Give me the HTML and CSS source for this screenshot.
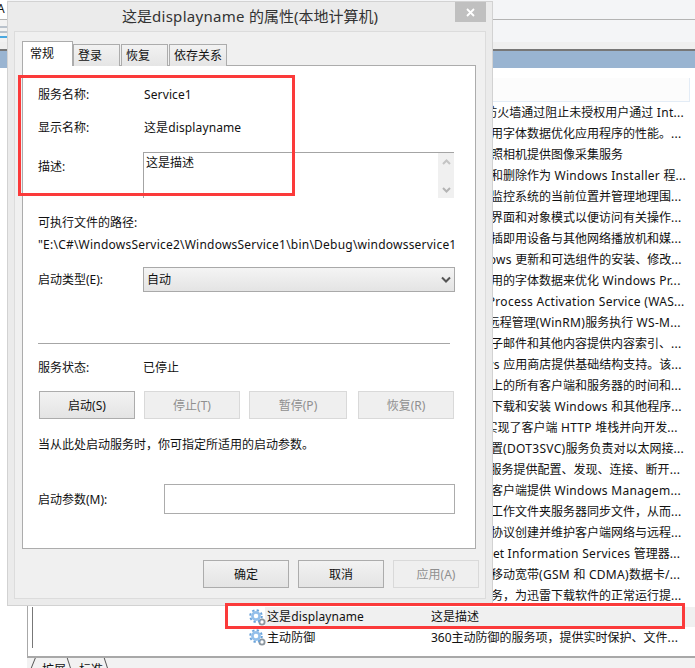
FILE: index.html
```html
<!DOCTYPE html>
<html lang="zh-CN">
<head>
	<meta charset="utf-8">
	<title>这是displayname 的属性(本地计算机)</title>
	<link rel="stylesheet" href="styles.css">
</head>
<body>
<svg class="defs" width="0" height="0">
	<symbol id="gear" viewBox="0 0 17 17">
		<circle cx="13" cy="13" r="2.6" fill="#fff" stroke="#8d979f" stroke-width="1.8"/>
		<circle cx="7" cy="7" r="5.8" fill="none" stroke="#6ba3da" stroke-width="2" stroke-dasharray="2.3 2.25"/>
		<circle cx="7" cy="7" r="3.6" fill="#fff" stroke="#93bfea" stroke-width="2.6"/>
	</symbol>
</svg>

<div class="services">
	<div class="topbar">
		<div class="stub"><span class="stub-letter">A</span></div>
	</div>
	<div class="toolbar">
		<div class="stub stub-icon"><i></i><i></i><i class="blue"></i></div>
	</div>
	<div class="strip"></div>
	<div class="band"></div>
	<div class="listwrap">
		<div class="gap"></div>
		<div class="listhead"></div>
		<div class="row"><span class="desc">Windows 防火墙通过阻止未授权用户通过<span class="lat"> Int...</span></span></div>
		<div class="row"><span class="desc">通过缓存常用字体数据优化应用程序的性能。<span class="lat">...</span></span></div>
		<div class="row"><span class="desc">为扫描仪和照相机提供图像采集服务</span></div>
		<div class="row"><span class="desc">添加、修改和删除作为<span class="lat"> Windows Installer </span>程<span class="lat">...</span></span></div>
		<div class="row"><span class="desc">此服务将会监控系统的当前位置并管理地理围<span class="lat">...</span></span></div>
		<div class="row"><span class="desc">提供通用的界面和对象模式以便访问有关操作<span class="lat">...</span></span></div>
		<div class="row"><span class="desc">此服务为即插即用设备与其他网络播放机和媒<span class="lat">...</span></span></div>
		<div class="row"><span class="desc">启用<span class="lat"> Windows </span>更新和可选组件的安装、修改<span class="lat">...</span></span></div>
		<div class="row"><span class="desc">通过缓存常用的字体数据来优化<span class="lat"> Windows Pr...</span></span></div>
		<div class="row"><span class="desc"><span class="lat">Windows Process Activation Service (WAS...</span></span></div>
		<div class="row"><span class="desc"><span class="lat">Windows </span>远程管理<span class="lat">(WinRM)</span>服务执行<span class="lat"> WS-M...</span></span></div>
		<div class="row"><span class="desc">为文件、电子邮件和其他内容提供内容索引、<span class="lat">...</span></span></div>
		<div class="row"><span class="desc">为<span class="lat"> Windows </span>应用商店提供基础结构支持。该<span class="lat">...</span></span></div>
		<div class="row"><span class="desc">维护在网络上的所有客户端和服务器的时间和<span class="lat">...</span></span></div>
		<div class="row"><span class="desc">启用检测、下载和安装<span class="lat"> Windows </span>和其他程序<span class="lat">...</span></span></div>
		<div class="row"><span class="desc">WinHTTP 实现了客户端<span class="lat"> HTTP </span>堆栈并向开发<span class="lat">...</span></span></div>
		<div class="row"><span class="desc">有线自动配置<span class="lat">(DOT3SVC)</span>服务负责对以太网接<span class="lat">...</span></span></div>
		<div class="row"><span class="desc">WLANSVC 服务提供配置、发现、连接、断开<span class="lat">...</span></span></div>
		<div class="row"><span class="desc">为各类远程客户端提供<span class="lat"> Windows Managem...</span></span></div>
		<div class="row"><span class="desc">此服务会将工作文件夹服务器同步文件，从而<span class="lat">...</span></span></div>
		<div class="row"><span class="desc">此服务通过协议创建并维护客户端网络与远程<span class="lat">...</span></span></div>
		<div class="row"><span class="desc">通过 Internet<span class="lat"> Information Services </span>管理器<span class="lat">...</span></span></div>
		<div class="row"><span class="desc">此服务管理移动宽带<span class="lat">(GSM </span>和<span class="lat"> CDMA)</span>数据卡<span class="lat">/...</span></span></div>
		<div class="row"><span class="desc">迅雷基础服务，为迅雷下载软件的正常运行提<span class="lat">...</span></span></div>
		<div class="row row-sel">
			<svg class="gear"><use href="#gear"/></svg>
			<span class="name">这是displayname</span>
			<span class="desc">这是描述</span>
		</div>
		<div class="row">
			<svg class="gear"><use href="#gear"/></svg>
			<span class="name">主动防御</span>
			<span class="desc">360主动防御的服务项，提供实时保护、文件<span class="lat">...</span></span>
		</div>
	</div>
	<div class="bottomtabs">
		<span class="btab btab-first">扩展</span>
		<span class="btab">标准</span>
	</div>
</div>

<div class="dialog">
	<div class="titlebar">这是<span class="lat">displayname </span>的属性(本地计算机)</div>
	<div class="closebtn">
		<svg width="11" height="11" viewBox="0 0 11 11"><path d="M2 2l7 7M9 2l-7 7" stroke="#fff" stroke-width="1.8" fill="none"/></svg>
	</div>
	<div class="panel">
		<div class="tabs">
			<span class="tab tab-on">常规</span>
			<span class="tab t2">登录</span>
			<span class="tab t2">恢复</span>
			<span class="tab t4">依存关系</span>
		</div>
		<div class="pane">
			<div class="field"><span>服务名称:</span><span class="val">Service1</span></div>
			<div class="field f-display"><span>显示名称:</span><span class="val">这是displayname</span></div>
			<div class="field f-desc">
				<span class="desc-label">描述:</span>
				<div class="textarea">
					<span class="textarea-text">这是描述</span>
					<div class="scroll">
						<svg width="9" height="6" viewBox="0 0 9 6"><path d="M1 5l3.5-3.5L8 5" stroke="#c4c4c4" stroke-width="2" fill="none"/></svg>
						<svg width="9" height="6" viewBox="0 0 9 6"><path d="M1 1l3.5 3.5L8 1" stroke="#b4b4b4" stroke-width="2" fill="none"/></svg>
					</div>
				</div>
			</div>
			<div class="line f-pathlabel">可执行文件的路径:</div>
			<div class="line f-path">"E:\C#\WindowsService2\WindowsService1\bin\Debug\windowsservice1</div>
			<div class="field f-type">
				<span>启动类型(E):</span>
				<div class="select">
					<span>自动</span>
					<svg width="10" height="7" viewBox="0 0 10 7"><path d="M1 1.5l4 4 4-4" stroke="#555" stroke-width="2" fill="none"/></svg>
				</div>
			</div>
			<div class="sep"></div>
			<div class="field f-status"><span>服务状态:</span><span>已停止</span></div>
			<div class="btnrow">
				<span class="btn b-ctl">启动(S)</span>
				<span class="btn b-ctl btn-off">停止(T)</span>
				<span class="btn b-pause btn-off">暂停(P)</span>
				<span class="btn b-ctl btn-off">恢复(R)</span>
			</div>
			<div class="line f-note">当从此处启动服务时，你可指定所适用的启动参数。</div>
			<div class="param">
				<span>启动参数(M):</span>
				<div class="input"></div>
			</div>
		</div>
		<div class="actions">
			<span class="btn b-act">确定</span>
			<span class="btn b-act">取消</span>
			<span class="btn b-act btn-off">应用(A)</span>
		</div>
	</div>
</div>

<div class="mark mark-top"></div>
<div class="mark mark-row"></div>
</body>
</html>
```

FILE: styles.css
```css
html, body {
	margin: 0;
	padding: 0;
}
body {
	position: relative;
	width: 695px;
	height: 668px;
	overflow: hidden;
	background: #fff;
	color: #111;
	font-family: "Noto Sans", "Noto Sans CJK SC", sans-serif;
	font-size: 12px;
	line-height: 20px;
}
.defs {
	position: absolute;
}
.lat {
	letter-spacing: .3px;
}

/* window behind the dialog */
.topbar {
	display: flex;
	height: 19px;
	background: #f4f5f7;
	border-bottom: 1px solid #b4b4b4;
}
.toolbar {
	display: flex;
	height: 22px;
	background: #f4f5f7;
}
.stub {
	width: 7px;
	background: #fff;
	overflow: hidden;
}
.stub-letter {
	display: block;
	margin-left: -3px;
	font-size: 12px;
	line-height: 18px;
}
.stub-icon {
	padding-top: 6px;
	box-sizing: border-box;
	background: #f2f2f2;
}
.stub-icon i {
	display: block;
	height: 2px;
	margin-bottom: 3px;
	background: #b9c2cc;
}
.stub-icon i.blue {
	background: #4aa8e0;
}
.strip {
	height: 7px;
	background: #efefef;
	border-bottom: 2px solid #777;
}
.band {
	height: 17px;
	background: #99b4d1;
}
.listwrap {
	height: 588px;
	margin-left: 27px;
	padding-left: 4px;
	border-left: 1px solid #a8a8a8;
}
.listwrap .gap,
.listwrap .listhead,
.listwrap .row {
	border-left: 1px solid #777;
}
.gap {
	height: 10px;
}
.listhead {
	height: 23px;
	margin-right: 5px;
	background: #fcfcfc;
	border-bottom: 1px solid #e3ecf6;
	border-right: 1px solid #e3ecf6;
}
.row {
	display: flex;
	align-items: center;
	height: 21px;
	padding-left: 216px;
	white-space: nowrap;
}
.row-sel {
	height: 20px;
	margin-top: 1px;
	background: linear-gradient(90deg, #fff 232px, #f0f0f0 232px);
}
.gear {
	flex: none;
	width: 17px;
	height: 17px;
}
.name {
	width: 164px;
	margin-left: 1px;
	letter-spacing: .1px;
}
.row .desc:first-child {
	margin-left: 182px;
}
.bottomtabs {
	display: flex;
	height: 10px;
	overflow: hidden;
	margin-left: 27px;
	padding-left: 12px;
	background: #f2f2f2;
	border-top: 2px solid #a8a8a8;
	line-height: 24px;
}
.btab {
	position: relative;
	width: 34px;
	padding-left: 3px;
}
.btab::after {
	content: "";
	position: absolute;
	right: 6px;
	top: 0;
	height: 14px;
	border-right: 1px solid #555;
	transform: skewX(18deg);
}
.btab-first::before {
	content: "";
	position: absolute;
	left: -7px;
	top: 0;
	height: 14px;
	border-left: 1px solid #555;
	transform: skewX(-22deg);
}

/* properties dialog */
.dialog {
	position: absolute;
	left: 7px;
	top: 1px;
	width: 486px;
	height: 605px;
	box-sizing: border-box;
	background: #ebebeb;
	border: 1px solid #d2d2d2;
}
.titlebar {
	height: 29px;
	text-align: center;
	font-size: 15px;
	line-height: 29px;
	color: #333;
}
.closebtn {
	position: absolute;
	right: 6px;
	top: 0;
	display: flex;
	align-items: center;
	justify-content: center;
	width: 31px;
	height: 20px;
	background: #c0c0c0;
}
.panel {
	box-sizing: border-box;
	height: 568px;
	margin: 0 6px;
	padding: 9px 9px 0 7px;
	background: #f0f0f0;
	border: 1px solid #dcdcdc;
}
.tabs {
	position: relative;
	display: flex;
	align-items: flex-end;
	gap: 1px;
	height: 25px;
	margin-bottom: -1px;
}
.tab {
	box-sizing: border-box;
	height: 22px;
	padding-left: 4px;
	background: linear-gradient(#f2f2f2, #e5e5e5);
	border: 1px solid #acacac;
	border-bottom: 0;
	line-height: 22px;
}
.tab-on {
	width: 51px;
	height: 25px;
	margin-right: -1px;
	padding-left: 7px;
	background: #fff;
	line-height: 24px;
}
.t2 {
	width: 47px;
}
.t4 {
	width: 58px;
}
.pane {
	box-sizing: border-box;
	height: 484px;
	padding: 18px 20px 0 15px;
	background: #fff;
	border: 1px solid #acacac;
}
.field {
	display: grid;
	grid-template-columns: 105px 1fr;
	align-items: center;
}
.field > span,
.line {
	padding-top: 1px;
}
.val {
	padding-left: 1px;
	letter-spacing: .12px;
}
.f-display {
	margin-top: 12px;
}
.f-desc {
	margin-top: 14px;
	align-items: start;
}
.desc-label {
	margin-top: 4px;
}
.textarea {
	display: flex;
	justify-content: space-between;
	box-sizing: border-box;
	width: 311px;
	height: 46px;
	padding-left: 2px;
	border-top: 1px solid #a4a4a4;
	border-left: 1px solid #a4a4a4;
}
.textarea-text {
	line-height: 19px;
}
.scroll {
	display: flex;
	flex-direction: column;
	align-items: center;
	justify-content: space-between;
	box-sizing: border-box;
	width: 16px;
	padding: 6px 0 5px;
	background: #f0f0f0;
}
.f-pathlabel {
	margin-top: 14px;
}
.f-path {
	margin-top: 1px;
	white-space: nowrap;
	letter-spacing: .22px;
}
.f-type {
	margin-top: 12px;
}
.select {
	display: flex;
	align-items: center;
	justify-content: space-between;
	box-sizing: border-box;
	width: 312px;
	height: 25px;
	padding: 0 3px;
	background: linear-gradient(#f4f4f4, #e4e4e4);
	border: 1px solid #a9a9a9;
}
.sep {
	height: 1px;
	width: 412px;
	margin-top: 51px;
	background: #a6a6a6;
}
.f-status {
	margin-top: 13px;
}
.btnrow {
	display: flex;
	gap: 9px;
	margin: 13px 0 0 1px;
}
.btn {
	display: flex;
	align-items: center;
	justify-content: center;
	box-sizing: border-box;
	padding-top: 1px;
	background: linear-gradient(#f2f2f2, #e4e4e4);
	border: 1px solid #acacac;
}
.btn-off {
	background: #efefef;
	border-color: #d9d9d9;
	color: #8f8f8f;
}
.b-ctl {
	width: 96px;
	height: 28px;
}
.b-pause {
	width: 98px;
	height: 28px;
	margin-right: 2px;
}
.f-note {
	margin-top: 14px;
	padding-top: 2px;
	white-space: nowrap;
}
.param {
	display: grid;
	grid-template-columns: 126px 291px;
	align-items: center;
	margin-top: 29px;
}
.param > span {
	padding-top: 1px;
}
.input {
	box-sizing: border-box;
	height: 30px;
	background: #fff;
	border: 1px solid #acacac;
}
.actions {
	display: flex;
	justify-content: flex-end;
	gap: 9px;
	margin: 11px -3px 0 0;
}
.b-act {
	width: 86px;
	height: 28px;
}

/* red annotation boxes */
.mark {
	position: absolute;
	box-sizing: border-box;
	border: 3px solid #fb3a3a;
}
.mark-top {
	left: 18px;
	top: 75px;
	width: 277px;
	height: 121px;
}
.mark-row {
	left: 225px;
	top: 603px;
	width: 460px;
	height: 26px;
}
```
